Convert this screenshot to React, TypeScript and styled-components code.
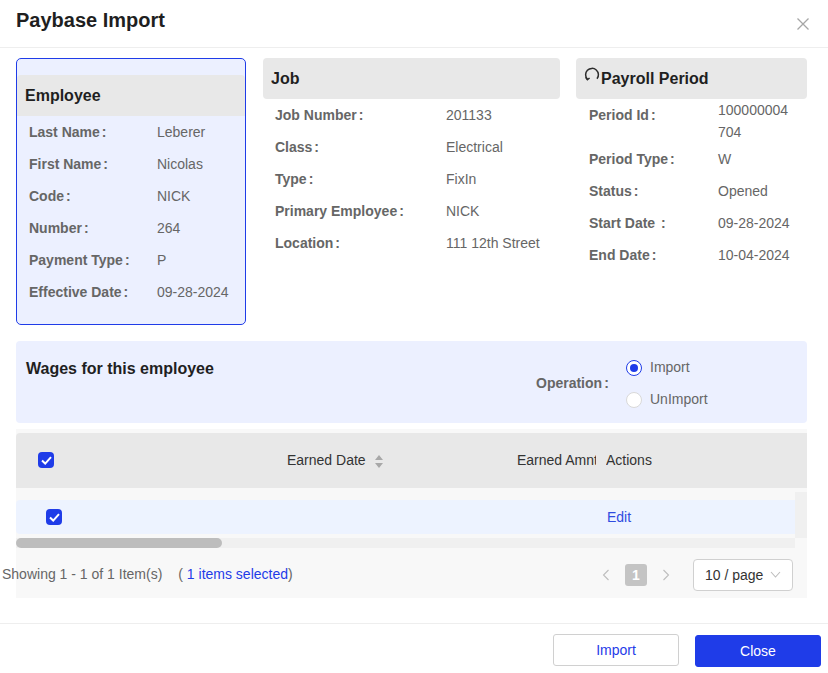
import React from "react";
import styled, { createGlobalStyle } from "styled-components";

const Global = createGlobalStyle`
  html, body { margin: 0; padding: 0; background: #fff; }
  body { font-family: "Liberation Sans", Arial, sans-serif; font-size: 14px; color: #666; }
  * { box-sizing: border-box; }
`;

const Modal = styled.div`
  width: 828px;
  height: 673px;
  background: #fff;
  overflow: hidden;
`;
const Header = styled.header`
  height: 48px;
  border-bottom: 1px solid #eeeeee;
  display: flex;
  align-items: center;
  justify-content: space-between;
  padding: 0 18px 8px 16px;
`;
const Title = styled.h1`
  margin: 0;
  font-size: 20px;
  line-height: 26px;
  font-weight: 700;
  color: #1f1f1f;
`;
const CloseX = styled.svg`
  width: 14px;
  height: 14px;
  stroke: #a6a6a6;
  stroke-width: 1.3;
  fill: none;
  margin-top: 8px;
`;
const Body = styled.div`
  padding: 10px 21px 0 16px;
`;
const InfoRow = styled.div`
  display: flex;
  align-items: flex-start;
  gap: 16px;
`;
const EmployeeCard = styled.section`
  width: 230px;
  height: 267px;
  margin-right: 1px;
  background: #ecf0ff;
  border: 1px solid #1f3ce8;
  border-radius: 5px;
  padding-top: 16px;
`;
const Plain = styled.section<{ $w: number }>`
  width: ${(p) => p.$w}px;
`;
const CardHead = styled.div<{ $rounded?: boolean }>`
  height: 41px;
  background: #e8e8e8;
  border-radius: ${(p) => (p.$rounded ? "4px" : "4px 4px 0 0")};
  display: flex;
  align-items: center;
  padding-left: 8px;
  font-size: 16px;
  font-weight: 700;
  color: #1f1f1f;
  position: relative;
`;
const Spinner = styled.svg`
  position: absolute;
  left: 8px;
  top: 8px;
  width: 16px;
  height: 18px;
  fill: none;
  stroke: #2b2b2b;
  stroke-width: 1.5;
`;
const SpinnerTitle = styled.span`
  padding-left: 17px;
`;
const Fields = styled.div<{ $left: number }>`
  padding: 0 0 0 ${(p) => p.$left}px;
`;
const Field = styled.div<{ $labelW: number; $tall?: boolean }>`
  display: grid;
  grid-template-columns: ${(p) => p.$labelW}px 1fr;
  height: ${(p) => (p.$tall ? "44px" : "32px")};
  align-items: start;
  line-height: 32px;
`;
const Label = styled.span`
  font-weight: 700;
  color: #666;
  white-space: pre;
`;
const Colon = styled.span`
  margin-left: 2px;
`;
const Value = styled.span<{ $wrap?: boolean }>`
  color: #666;
  ${(p) => (p.$wrap ? `line-height: 22px; width: 73px; word-break: break-all;` : "")}
`;
const Wages = styled.section`
  margin-top: 16px;
  height: 82px;
  width: 791px;
  background: #ecf0ff;
  border-radius: 4px;
  display: flex;
  justify-content: space-between;
  padding: 0 0 0 10px;
`;
const WagesTitle = styled.h2`
  margin: 18px 0 0;
  font-size: 16px;
  line-height: 20px;
  font-weight: 700;
  color: #1f1f1f;
`;
const Operation = styled.div`
  display: flex;
  align-items: center;
  width: 271px;
  padding-top: 2px;
`;
const OpLabel = styled.span`
  width: 90px;
  font-weight: 700;
`;
const Radios = styled.div`
  display: flex;
  flex-direction: column;
`;
const RadioRow = styled.label`
  display: flex;
  align-items: center;
  height: 32px;
  gap: 8px;
`;
const Radio = styled.span<{ $on?: boolean }>`
  width: 16px;
  height: 16px;
  margin-top: 2px;
  border-radius: 50%;
  background: #fff;
  border: 1px solid ${(p) => (p.$on ? "#1f3ce8" : "#d9d9d9")};
  display: flex;
  align-items: center;
  justify-content: center;
  &::after {
    content: "";
    display: ${(p) => (p.$on ? "block" : "none")};
    width: 8px;
    height: 8px;
    border-radius: 50%;
    background: #1f3ce8;
  }
`;
const Table = styled.section`
  margin-top: 6px;
  width: 791px;
  background: #f8f8f8;
  padding-top: 4px;
`;
const HeadRow = styled.div`
  height: 55px;
  padding-bottom: 1px;
  background: #e8e8e8;
  border-radius: 4px 0 0 0;
  display: grid;
  grid-template-columns: 271px 230px 89px 1fr;
  align-items: center;
  color: #333;
`;
const HeadCheckCell = styled.div`
  padding-left: 22px;
  display: flex;
`;
const HeadCell = styled.div<{ $clip?: number }>`
  display: flex;
  align-items: center;
  gap: 9px;
  overflow: hidden;
  white-space: nowrap;
  ${(p) => (p.$clip ? `width: ${p.$clip}px;` : "")}
`;
const Scroller = styled.div`
  display: grid;
  grid-template-columns: 779px 12px;
  padding-top: 4px;
`;
const ScrollInner = styled.div`
  padding-top: 8px;
`;
const DataRow = styled.div`
  height: 34px;
  background: #edf3ff;
  border-radius: 4px 0 0 4px;
  display: grid;
  grid-template-columns: 591px 1fr;
  align-items: center;
`;
const RowCheckCell = styled.div`
  padding-left: 30px;
  display: flex;
`;
const EditLink = styled.a`
  color: #2f4be0;
`;
const HBar = styled.div`
  margin-top: 4px;
  height: 10px;
  background: #f0f0f0;
`;
const HThumb = styled.div`
  width: 206px;
  height: 10px;
  background: #bdbdbd;
  border-radius: 5px;
`;
const VBar = styled.div`
  height: 46px;
  background: #f0f0f0;
`;
const Check = styled.span`
  width: 16px;
  height: 16px;
  border-radius: 4px;
  background: #1f3ce8;
  display: flex;
  align-items: center;
  justify-content: center;
`;
const CheckMark = styled.svg`
  width: 11px;
  height: 9px;
  margin-top: 1px;
  fill: none;
  stroke: #fff;
  stroke-width: 2;
`;
const Sorter = styled.svg`
  width: 8px;
  height: 13px;
  fill: #a8a8a8;
  margin-top: 3px;
`;
const Pager = styled.div`
  height: 50px;
  background: #f8f8f8;
  display: flex;
  align-items: center;
  justify-content: space-between;
  padding: 3px 14px 0 0;
`;
const ShowingText = styled.div`
  margin: -1px 0 0 -14px;
  white-space: nowrap;
`;
const Selected = styled.span`
  margin-left: 16px;
`;
const SelectedCount = styled.span`
  color: #1f3ce8;
`;
const PagerRight = styled.div`
  display: flex;
  align-items: center;
`;
const Arrow = styled.svg`
  width: 8px;
  height: 12px;
  fill: none;
  stroke: #bdbdbd;
  stroke-width: 1.1;
`;
const PageNum = styled.span`
  width: 22px;
  height: 22px;
  margin: 0 15px;
  border-radius: 3px;
  background: #c4c4c4;
  color: #fff;
  font-weight: 700;
  display: flex;
  align-items: center;
  justify-content: center;
`;
const PageSize = styled.div`
  width: 100px;
  height: 32px;
  margin-left: 23px;
  background: #fff;
  border: 1px solid #d0d0d0;
  border-radius: 4px;
  display: flex;
  align-items: center;
  justify-content: space-between;
  padding: 0 11px;
  color: #333;
`;
const Chevron = styled.svg`
  width: 11px;
  height: 7px;
  fill: none;
  stroke: #bdbdbd;
  stroke-width: 1.1;
`;
const Footer = styled.footer`
  margin-top: 25px;
  border-top: 1px solid #eeeeee;
  display: flex;
  justify-content: flex-end;
  gap: 16px;
  padding: 10px 7px 0 0;
`;
const Button = styled.button<{ $primary?: boolean }>`
  width: 126px;
  height: 32px;
  margin-top: ${(p) => (p.$primary ? "1px" : "0")};
  border-radius: 3px;
  font: 14px "Liberation Sans", Arial, sans-serif;
  background: ${(p) => (p.$primary ? "#1f3ce8" : "#fff")};
  color: ${(p) => (p.$primary ? "#fff" : "#1f3ce8")};
  border: 1px solid ${(p) => (p.$primary ? "#1f3ce8" : "#d0d0d0")};
`;

type F = [string, string, boolean?];
const employee: F[] = [
  ["Last Name", "Leberer"],
  ["First Name", "Nicolas"],
  ["Code", "NICK"],
  ["Number", "264"],
  ["Payment Type", "P"],
  ["Effective Date", "09-28-2024"],
];
const job: F[] = [
  ["Job Number", "201133"],
  ["Class", "Electrical"],
  ["Type", "FixIn"],
  ["Primary Employee", "NICK"],
  ["Location", "111 12th Street"],
];
const period: F[] = [
  ["Period Id", "100000004704", true],
  ["Period Type", "W"],
  ["Status", "Opened"],
  ["Start Date ", "09-28-2024"],
  ["End Date", "10-04-2024"],
];

const FieldList = ({ items, left, labelW }: { items: F[]; left: number; labelW: number }) => (
  <Fields $left={left}>
    {items.map(([l, v, w]) => (
      <Field key={l} $labelW={labelW} $tall={w}>
        <Label>
          {l}
          <Colon>:</Colon>
        </Label>
        <Value $wrap={w}>{v}</Value>
      </Field>
    ))}
  </Fields>
);

const Tick = () => (
  <Check>
    <CheckMark viewBox="0 0 11 9">
      <path d="M1 4.6 L4.2 7.6 L10 1.2" />
    </CheckMark>
  </Check>
);

export default function App() {
  return (
    <Modal>
      <Global />
      <Header>
        <Title>Paybase Import</Title>
        <CloseX viewBox="0 0 14 14">
          <path d="M1.5 1.5 L12.5 12.5 M12.5 1.5 L1.5 12.5" />
        </CloseX>
      </Header>
      <Body>
        <InfoRow>
          <EmployeeCard>
            <CardHead>Employee</CardHead>
            <FieldList items={employee} left={12} labelW={128} />
          </EmployeeCard>
          <Plain $w={297}>
            <CardHead $rounded>Job</CardHead>
            <FieldList items={job} left={12} labelW={171} />
          </Plain>
          <Plain $w={231}>
            <CardHead $rounded>
              <Spinner viewBox="0 0 16 18">
                <path d="M3.4 13.2 A6.4 6.4 0 1 1 13 12.8" />
                <path d="M1.6 11.2 L3.4 13.6 L5.6 12" />
              </Spinner>
              <SpinnerTitle>Payroll Period</SpinnerTitle>
            </CardHead>
            <FieldList items={period} left={13} labelW={129} />
          </Plain>
        </InfoRow>
        <Wages>
          <WagesTitle>Wages for this employee</WagesTitle>
          <Operation>
            <OpLabel>
              Operation<Colon>:</Colon>
            </OpLabel>
            <Radios>
              <RadioRow>
                <Radio $on />
                Import
              </RadioRow>
              <RadioRow>
                <Radio />
                UnImport
              </RadioRow>
            </Radios>
          </Operation>
        </Wages>
        <Table>
          <HeadRow>
            <HeadCheckCell>
              <Tick />
            </HeadCheckCell>
            <HeadCell>
              Earned Date
              <Sorter viewBox="0 0 8 13">
                <path d="M4 0 L8 5 H0 Z M4 13 L0 8 H8 Z" />
              </Sorter>
            </HeadCell>
            <HeadCell $clip={79}>Earned Amnt</HeadCell>
            <HeadCell>Actions</HeadCell>
          </HeadRow>
          <Scroller>
            <ScrollInner>
              <DataRow>
                <RowCheckCell>
                  <Tick />
                </RowCheckCell>
                <EditLink>Edit</EditLink>
              </DataRow>
              <HBar>
                <HThumb />
              </HBar>
            </ScrollInner>
            <VBar />
          </Scroller>
          <Pager>
            <ShowingText>
              Showing 1 - 1 of 1 Item(s)
              <Selected>
                ( <SelectedCount>1 items selected</SelectedCount>)
              </Selected>
            </ShowingText>
            <PagerRight>
              <Arrow viewBox="0 0 8 12">
                <path d="M6.5 1 L1.5 6 L6.5 11" />
              </Arrow>
              <PageNum>1</PageNum>
              <Arrow viewBox="0 0 8 12">
                <path d="M1.5 1 L6.5 6 L1.5 11" />
              </Arrow>
              <PageSize>
                10 / page
                <Chevron viewBox="0 0 11 7">
                  <path d="M1 1 L5.5 6 L10 1" />
                </Chevron>
              </PageSize>
            </PagerRight>
          </Pager>
        </Table>
      </Body>
      <Footer>
        <Button>Import</Button>
        <Button $primary>Close</Button>
      </Footer>
    </Modal>
  );
}
